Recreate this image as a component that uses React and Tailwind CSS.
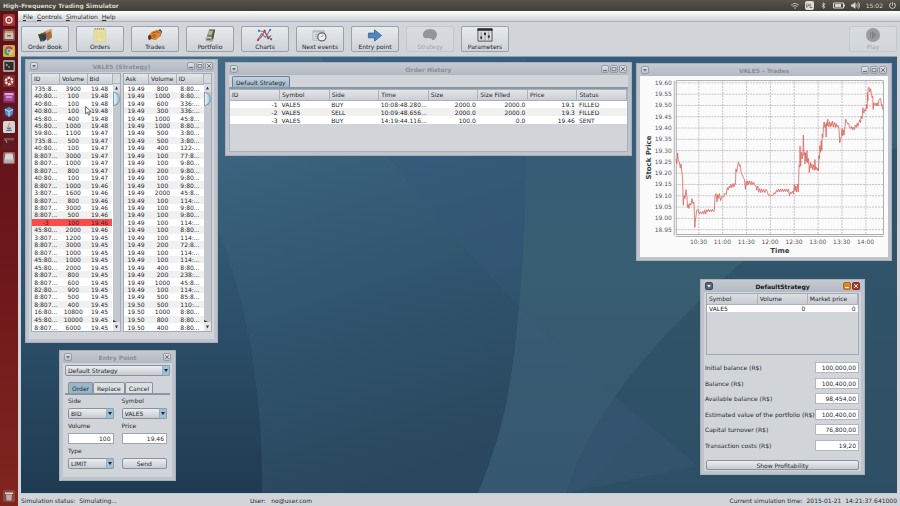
import React from "react";
import { FaWifi, FaBluetoothB, FaVolumeHigh, FaPowerOff } from "react-icons/fa6";

const BIDS = [
  ["735:8...", 3900, "19.48"], ["40:80...", 100, "19.48"], ["40:80...", 100, "19.48"],
  ["40:80...", 100, "19.48"], ["45:80...", 400, "19.48"], ["45:80...", 1000, "19.48"],
  ["59:80...", 1100, "19.47"], ["735:8...", 500, "19.47"], ["40:80...", 100, "19.47"],
  ["8:807...", 3000, "19.47"], ["8:807...", 1000, "19.47"], ["8:807...", 800, "19.47"],
  ["40:80...", 100, "19.47"], ["8:807...", 1000, "19.46"], ["3:807...", 1600, "19.46"],
  ["8:807...", 800, "19.46"], ["8:807...", 3000, "19.46"], ["8:807...", 500, "19.46"],
  ["-3", 100, "19.46"], ["45:80...", 2000, "19.46"], ["3:807...", 1200, "19.45"],
  ["8:807...", 3000, "19.45"], ["8:807...", 1000, "19.45"], ["45:80...", 1000, "19.45"],
  ["45:80...", 2000, "19.45"], ["8:807...", 800, "19.45"], ["8:807...", 600, "19.45"],
  ["82:80...", 900, "19.45"], ["8:807...", 500, "19.45"], ["8:807...", 400, "19.45"],
  ["16:80...", 10800, "19.45"], ["45:80...", 10000, "19.45"], ["8:807...", 6000, "19.45"],
];

const ASKS = [
  ["19.49", 800, "8:80..."], ["19.49", 1000, "8:80..."], ["19.49", 600, "336:..."],
  ["19.49", 300, "336:..."], ["19.49", 1000, "45:8..."], ["19.49", 1000, "8:80..."],
  ["19.49", 500, "3:80..."], ["19.49", 500, "3:80..."], ["19.49", 400, "122-..."],
  ["19.49", 100, "77:8..."], ["19.49", 100, "9:80..."], ["19.49", 200, "9:80..."],
  ["19.49", 100, "9:80..."], ["19.49", 100, "9:80..."], ["19.49", 2000, "45:8..."],
  ["19.49", 100, "114:..."], ["19.49", 100, "9:80..."], ["19.49", 100, "9:80..."],
  ["19.49", 100, "114:..."], ["19.49", 100, "8:80..."], ["19.49", 100, "114:..."],
  ["19.49", 200, "72:8..."], ["19.49", 100, "114:..."], ["19.49", 100, "114:..."],
  ["19.49", 400, "8:80..."], ["19.49", 200, "238:..."], ["19.49", 1000, "45:8..."],
  ["19.49", 100, "114:..."], ["19.49", 500, "85:8..."], ["19.50", 500, "110:..."],
  ["19.50", 1000, "8:80..."], ["19.50", 800, "8:80..."], ["19.50", 400, "8:80..."],
];

const ORDERS = [
  ["-1", "VALE5", "BUY", "10:08:48.280...", "2000.0", "2000.0", "19.1", "FILLED"],
  ["-2", "VALE5", "SELL", "10:09:48.656...", "2000.0", "2000.0", "19.3", "FILLED"],
  ["-3", "VALE5", "BUY", "14:19:44.116...", "100.0", "0.0", "19.46", "SENT"],
];

const BALANCES = [
  ["Initial balance (R$)", "100,000,00"],
  ["Balance (R$)", "100,400,00"],
  ["Available balance (R$)", "98,454,00"],
  ["Estimated value of the portfolio (R$)", "100,400,00"],
  ["Capital turnover (R$)", "76,800,00"],
  ["Transaction costs (R$)", "19,20"],
];

const PRICES = ["19.60", "19.55", "19.50", "19.45", "19.40", "19.35", "19.30", "19.25", "19.20", "19.15", "19.10", "19.05", "19.00", "18.95"];
const TIMES = ["10:30", "11:00", "11:30", "12:00", "12:30", "13:00", "13:30", "14:00"];

const TRADES =
  "136,310 138,325 141,292 143,318 146,320 149,338 151,325 154,352 156,372 157,420 158,450 160,420 163,430 166,403 169,425 171,457 173,448 175,460 178,444 181,450 184,430 187,445 190,440 191,470 193,517 194,500 196,485 199,464 204,464 206,477 210,470 213,477 217,468 220,477 223,464 226,477 229,464 231,470 234,462 237,470 240,464 243,470 246,462 249,470 252,466 254,420 257,415 260,440 262,418 265,430 267,415 271,436 276,422 280,426 283,415 288,417 291,397 294,404 297,392 299,398 302,387 305,397 308,385 311,395 313,385 316,387 317,340 320,350 322,332 325,320 328,332 330,328 333,352 337,360 341,370 343,372 346,402 348,378 351,390 353,376 356,387 359,377 362,388 365,378 368,388 371,381 374,388 378,392 380,405 383,392 386,411 389,400 392,412 395,401 398,411 401,402 405,412 408,402 412,408 415,420 418,418 421,422 425,420 430,420 433,412 436,416 440,404 443,410 446,401 449,410 452,401 455,409 458,401 461,409 464,401 467,409 470,401 473,409 476,401 479,422 482,410 485,415 488,408 491,416 494,388 496,408 498,392 501,410 503,386 506,410 508,330 510,335 511,272 513,332 515,290 518,310 520,280 521,238 523,300 525,290 526,325 528,292 530,318 532,285 534,322 536,308 538,330 539,352 542,320 544,338 547,325 549,342 552,328 554,345 556,312 558,342 560,335 563,345 565,338 567,346 568,300 570,310 571,270 573,290 575,255 577,285 578,235 580,245 582,210 584,198 586,215 588,205 590,244 591,200 593,210 595,190 597,212 600,198 602,214 605,200 607,210 609,196 612,214 615,200 618,215 620,203 623,214 626,208 629,220 631,262 634,250 636,240 638,218 640,240 642,222 644,238 647,212 649,190 652,198 655,205 658,202 660,212 663,218 666,212 669,222 672,214 675,222 678,208 681,215 684,202 686,212 689,200 692,192 694,200 696,180 699,188 701,155 704,172 707,160 710,165 712,145 714,158 715,110 716,135 717,95 720,94 722,108 724,98 727,112 729,125 731,120 732,160 734,140 737,148 740,142 742,150 744,140 747,150 749,134 752,128 755,128 757,150 759,145 761,160 763,162";

function TitleButton({ kind, label, className = "" }) {
  return (
    <button type="button" aria-label={label} className={`size-[8px] rounded-xs border bg-linear-to-b ${className}`}>
      <svg viewBox="0 0 6 6" className="block size-[6px]" fill="none" stroke="currentColor">
        {kind === "menu" && <path d="M1.2 2h3.6L3 4.4z" fill="currentColor" stroke="none" />}
        {kind === "min" && <path d="M1 4.6h4" />}
        {kind === "max" && <path d="M1 1.5h4v3.2H1z" strokeWidth=".7" />}
        {kind === "close" && <path d="M1.2 1.2l3.6 3.6M4.8 1.2L1.2 4.8" strokeWidth=".9" />}
      </svg>
    </button>
  );
}

function Frame({ title, closeOnly, active, className, children }) {
  const plain = "z-10 border-[#969ca6] from-[#dfe2e6] to-[#bcc2cb] text-[#5f646c]";
  return (
    <section className={`absolute flex flex-col border border-[#a9b0ba] bg-[#bfc4cc] px-[3px] pb-[3px] ${className}`}>
      <header className="relative flex h-3 shrink-0 items-center justify-end gap-px bg-linear-to-b from-[#c5cad1] to-[#b3b9c3] px-px">
        <h2 className={`absolute inset-x-0 text-center text-[6px] font-bold ${active ? "text-[#17191c]" : "text-[#8a8f96]"}`}>{title}</h2>
        <TitleButton kind="menu" label="Window menu" className={active ? "z-10 mr-auto border-[#3f4a5d] bg-[#56637a] bg-none text-white" : `mr-auto ${plain}`} />
        {(active || !closeOnly) && <TitleButton kind="min" label="Minimize" className={active ? "z-10 border-[#b5681c] bg-[#d9861f] bg-none text-white" : plain} />}
        {!closeOnly && <TitleButton kind="max" label="Maximize" className={plain} />}
        <TitleButton kind="close" label="Close" className={active ? "z-10 border-[#8a2a26] bg-[#b03a30] bg-none text-white" : plain} />
      </header>
      <div className="flex min-h-0 flex-1 flex-col bg-[#d1d5d9]">{children}</div>
    </section>
  );
}

function BookTable({ heads, rows, widths, label }) {
  return (
    <div className="flex min-w-0 flex-1 border border-[#a5abb3]">
      <table aria-label={label} className="h-[257px] flex-1 table-fixed bg-white">
        <thead className="h-[10px] bg-linear-to-b from-[#e6e8eb] to-[#c9cdd3]">
          <tr>
            {heads.map((h, i) => (
              <th key={h} scope="col" className={`${widths[i]} h-[10px] border-r border-b border-[#adb2ba] pl-[2px] text-left font-normal`}>{h}</th>
            ))}
          </tr>
        </thead>
        <tbody>
          {rows.map((r, i) => (
            <tr key={i} className={r[0] === "-3" ? "bg-[#fb4c4c]" : i % 2 ? "bg-[#f0f0f0]" : "bg-white"}>
              {r.map((c, j) => (
                <td key={j} className="text-center">{c}</td>
              ))}
            </tr>
          ))}
        </tbody>
      </table>
      <div className="flex w-[7px] flex-col items-center bg-[#c3c8cf] text-[#33373c]">
        <div className="h-[10px] w-full border-b border-[#adb2ba] bg-[#d5d8dc]" />
        <svg viewBox="0 0 7 8" className="h-2 w-full bg-[#d9dce0]"><path d="M2 5.500h3L3.500 2.500z" fill="currentColor" /></svg>
        <div className="h-[14px] w-full rounded-r-full border border-[#7d9db5] bg-linear-to-r from-[#e6f1f8] to-[#9fc3da]" />
        <svg viewBox="0 0 7 11" className="mt-auto h-[11px] w-full"><path d="M0 0l4 2h3v9H0z" fill="#e4e6e9" /><path d="M0 0l4 2H0zM2 5.500h3L3.500 8.500z" fill="currentColor" /></svg>
      </div>
    </div>
  );
}

function Select({ label, value, id }) {
  return (
    <div className="relative">
      <select id={id} aria-label={label} defaultValue={value} className="block h-[11px] w-full appearance-none rounded-xs border border-[#8b929c] bg-linear-to-b from-[#eceef0] to-[#c6cbd1] pl-[2px] leading-none">
        <option>{value}</option>
      </select>
      <svg viewBox="0 0 8 11" className="pointer-events-none absolute top-0 right-0 h-[11px] w-2">
        <path d="M0 .3h6.500a1.200 1.200 0 0 1 1.200 1.200v8a1.200 1.200 0 0 1-1.200 1.200H0z" fill="#a3bfd4" stroke="#748ea5" strokeWidth=".6" />
        <path d="M2 4h4L4 7z" fill="#1d2733" />
      </svg>
    </div>
  );
}

const TOOLS = [
  {
    name: "Order Book",
    icon: (
      <>
        <path d="M8 5l7-3 1 9-5 4z" fill="#a56b3c" /><path d="M8 5l7-3 .3 2-6 3z" fill="#d9a878" />
        <path d="M4 7l5-2 1 8-4 3z" fill="#7a5426" /><path d="M1 8l4-1 2 6-3 3z" fill="#3d4a2a" /><path d="M5 9l4-2 1 6-3 2z" fill="#253e66" />
      </>
    ),
  },
  {
    name: "Orders",
    icon: (
      <>
        <path d="M2 2h12.500v14H2z" fill="#eadf9f" stroke="#cfc58b" strokeWidth=".5" />
        <path d="M3 2h11" stroke="#76705a" strokeWidth="1.500" strokeDasharray="1 1.200" /><path d="M4.500 3v13" stroke="#dfc9a0" strokeWidth=".6" /><path d="M6 6h7M6 8.500h7M6 11h7" stroke="#d6cc8e" strokeWidth=".4" />
      </>
    ),
  },
  {
    name: "Trades",
    icon: (
      <>
        <path d="M10 5l4-3 2 3-2 5-4 1z" fill="#4c3a44" /><path d="M1 10l4-5 6-2 4 2-1 5-5 4-4-1-3 1z" fill="#dc8a32" />
        <path d="M5 7l5-2 3 1M4 10l5-2M6 12l4-3" stroke="#83400f" strokeWidth=".8" fill="none" /><path d="M1 10l2-2 2 4-3 2z" fill="#6b2a12" />
      </>
    ),
  },
  {
    name: "Portfolio",
    icon: (
      <>
        <path d="M8 2l6 1-3 8-6-1z" fill="#77776a" /><path d="M8 4l4 .5-2 4-4-.5z" fill="#b9b49a" />
        <path d="M4 11l8 1-1 4-7-1z" fill="#a8aa9c" /><path d="M12 3l2 0-2 10-2 0z" fill="#54543f" /><path d="M5 13h4" stroke="#4a4b42" />
      </>
    ),
  },
  {
    name: "Charts",
    icon: (
      <>
        <path d="M1 13l4-6 4 4 5-8" stroke="#5f88b8" strokeWidth="1.200" fill="none" /><path d="M2 4l5 1 4 4 4 4" stroke="#5f88b8" fill="none" />
        <path d="M1 14l4-4 3-6 4 8 3-3" stroke="#cc4444" strokeWidth="1.200" fill="none" />
        <path d="M13 2h2v2h-2zM1 3h2v2H1zM14 12h2v2h-2z" fill="#3f70ae" /><path d="M0 13h2v2H0zM7 3h2v2H7zM11 11h2v2h-2z" fill="#c03434" />
      </>
    ),
  },
  {
    name: "Next events",
    icon: (
      <>
        <path d="M1 4h12v10H1z" fill="#e2e3e4" stroke="#a3a6a8" strokeWidth=".7" /><path d="M1 4h12v2H1z" fill="#bcbfc2" /><path d="M3 8h4M3 10h3M3 12h4" stroke="#9b9ea1" strokeWidth=".8" />
        <circle cx="10.500" cy="10.500" r="4.300" fill="#edefef" stroke="#5c6064" strokeWidth="1.200" /><path d="M10.500 10.500l2-2M10.500 10.500l-1-1" stroke="#777" strokeWidth=".7" />
      </>
    ),
  },
  { name: "Entry point", icon: <path d="M1.500 6.500h6.500V3l7.500 6-7.500 6v-3.500H1.500z" fill="#4e8ac0" stroke="#2d5885" strokeWidth=".8" /> },
  { name: "Strategy", off: true, icon: <path d="M1 8c0-3 3-6 8-6 4 0 7 3 7 6s-2 3-2 5l-3 1-1-2c-2 1-3-1-5 0-3 0-4-1-4-4z" fill="#939699" /> },
  {
    name: "Parameters",
    icon: (
      <>
        <path d="M1 2h15v13H1z" fill="#d9dbdb" stroke="#505356" strokeWidth="1" /><path d="M.5 1.500h16v2.500H.5z" fill="#282b2e" />
        <path d="M4.500 5v9M8.500 5v9M12.500 5v9" stroke="#77797c" strokeWidth=".7" /><path d="M3.500 10h2v2.500h-2zM7.500 6h2v2.500h-2zM11.500 9h2v2.500h-2z" fill="#2b2d30" />
      </>
    ),
  },
];

function ToolButton({ name, icon, off }) {
  return (
    <button
      type="button"
      disabled={off}
      className={`flex h-[26px] w-12 flex-col items-center rounded-xs border bg-linear-to-b ${off ? "border-[#c3c8cd] from-[#d8dbde] to-[#d2d6da] text-[#a2a6ab]" : "border-[#9ba1aa] from-[#e7eaed] to-[#cdd2d7] text-[#1e2124]"}`}
    >
      <svg viewBox="0 0 17 17" className="size-4 shrink-0">{icon}</svg>
      <span className="leading-[8px] whitespace-nowrap">{name}</span>
    </button>
  );
}

const LAUNCHERS = [
  { name: "Dash", bg: "#a53635", art: <><circle cx="6" cy="6" r="3" fill="none" stroke="#f2e3df" strokeWidth="1.400" /><circle cx="6" cy="6" r=".8" fill="#f2e3df" /></> },
  { name: "Files", bg: "#8e4f45", art: <><path d="M2 2h8v3H2z" fill="#d79a5e" /><path d="M1.500 4h9v6h-9z" fill="#c9c3bc" /><path d="M4 6h4v1.500H4z" fill="#756d67" /></> },
  { name: "Chrome", bg: "#c9ac55", art: <><circle cx="6" cy="6" r="4.500" fill="#e9c440" /><path d="M6 6L2 3.500A4.500 4.500 0 0 1 10 4z" fill="#cf4335" /><path d="M6 6v4.500A4.500 4.500 0 0 1 2 3.500z" fill="#4b9b4a" /><circle cx="6" cy="6" r="2" fill="#4c86c9" stroke="#fff" strokeWidth=".6" /></> },
  { name: "Terminal", bg: "#a39f9d", art: <><path d="M1.500 2h9v8h-9z" fill="#2d2a2c" /><path d="M3 4l1.500 1L3 6M5 7h2" stroke="#eee" strokeWidth=".7" fill="none" /></> },
  { name: "Settings", bg: "#822b2c", art: <><circle cx="6" cy="6" r="3.200" fill="none" stroke="#e5e1df" strokeWidth="2.400" strokeDasharray="2.600 .7" /><path d="M6 6l3.500 3.500" stroke="#d8564b" strokeWidth="1.500" /></> },
  { name: "Software", bg: "#7c2b58", art: <><path d="M1.500 2h9v3h-9z" fill="#e1a9d2" /><path d="M1.500 4h9v6h-9z" fill="#a84b9c" /><path d="M3 5h6v2H3z" fill="#d58bca" /></> },
  { name: "VirtualBox", bg: "#4f2236", art: <><path d="M6 1l4.500 2.200-1 5.500L6 11 2.500 8.700l-1-5.500z" fill="#5f8abf" /><path d="M2 3.500l4 2 4-2M6 5.500v5" stroke="#d6e4f2" strokeWidth=".9" fill="none" /></> },
  { name: "Java", bg: "#d3d4d3", art: <><path d="M6 2c2 1-2 2 0 4" stroke="#cf7040" fill="none" /><path d="M3.500 6.500h5l-1 2h-3z" fill="#5b7897" /><path d="M3 9.500h6" stroke="#5b7897" /></> },
  { name: "Workspace", bg: "#5c1c22", art: <><path d="M1 1h10v2.500H1z" fill="#7d4f55" /><path d="M2 3l2 1.500L3 6" stroke="#c9b9b9" strokeWidth=".7" fill="none" /></> },
  { name: "Disk", bg: "#9c6060", art: <><path d="M2.500 1.500h7l1 6v3h-9v-3z" fill="#d6d6d6" /><path d="M1.500 7.500h9v3h-9z" fill="#b3b4b6" /></> },
];

function Launcher({ name, bg, art }) {
  return (
    <button type="button" aria-label={name} className="size-3">
      <svg viewBox="0 0 12 12" className="size-3">
        <rect width="12" height="12" rx="1.500" fill={bg} />
        {art}
      </svg>
    </button>
  );
}

function Wallpaper() {
  return (
    <svg viewBox="0 0 876 437" preserveAspectRatio="none" className="absolute inset-0 size-full">
      <defs>
        <linearGradient id="sky" gradientUnits="userSpaceOnUse" x1="200" y1="0" x2="340" y2="437">
          <stop offset="0" stopColor="#436b88" /><stop offset=".5" stopColor="#325872" /><stop offset="1" stopColor="#29475e" />
        </linearGradient>
        <linearGradient id="right" x1="0" y1="0" x2="0" y2="1">
          <stop offset="0" stopColor="#365b7a" /><stop offset=".5" stopColor="#385e72" /><stop offset="1" stopColor="#33556b" />
        </linearGradient>
        <linearGradient id="left" x1="0" y1="0" x2="0" y2="1">
          <stop offset="0" stopColor="#3f6a8b" /><stop offset=".6" stopColor="#2d506a" /><stop offset="1" stopColor="#1f3b52" />
        </linearGradient>
      </defs>
      <rect width="876" height="437" fill="url(#sky)" />
      <path d="M80 0C170 80 243 220 241 437H0V0z" fill="url(#left)" />
      <path d="M505 0Q508 220 486 345Q478 385 457 437H876V0z" fill="url(#right)" />
      <path d="M300 0Q370 120 498 250Q508 130 505 0z" fill="#34577a" opacity=".4" />
      <path d="M498 252L580 329L625 370L560 437H457Q490 360 498 252z" fill="#3a5c7a" opacity=".3" />
      <path d="M876 90Q680 220 594 340Q560 390 545 437H876z" fill="#27495f" opacity=".5" />
      <path d="M594 340L676 410L545 437Q560 390 594 340z" fill="#3b587a" opacity=".35" />
    </svg>
  );
}

function TradesChart() {
  return (
    <svg viewBox="0 0 250 182" className="size-full bg-[#fbfbfb]" role="img" aria-label="Stock price over time">
      <g stroke="#ababab" strokeWidth=".7" strokeDasharray="2 1">
        {PRICES.map((p, i) => <line key={p} x1="36" x2="245" y1={6.7 + i * 11.38} y2={6.7 + i * 11.38} />)}
        {TIMES.map((t, i) => <line key={t} y1="4" y2="160" x1={59.3 + i * 24.05} x2={59.3 + i * 24.05} />)}
      </g>
      <rect x="36.500" y="4.500" width="209" height="155" fill="none" stroke="#8f8f8f" strokeWidth=".7" />
      <path d="M34.500 4.500v156M36 161.500h209.500" stroke="#9a9a9a" strokeWidth=".8" />
      <g fontSize="6" fill="#55585c">
        {PRICES.map((p, i) => <text key={p} x="32" y={8.7 + i * 11.38} textAnchor="end">{p}</text>)}
        {TIMES.map((t, i) => <text key={t} x={59 + i * 24.05} y="169" textAnchor="middle">{t}</text>)}
      </g>
      <g fontSize="7" fontWeight="bold" fill="#3c3f42" textAnchor="middle">
        <text x="141" y="178">Time</text>
        <text transform="translate(11 82) rotate(-90)">Stock Price</text>
      </g>
      <polyline transform="translate(-9 -20) scale(.3333)" points={TRADES} fill="none" stroke="#dd625d" strokeWidth="2.400" />
    </svg>
  );
}

function OrderHistory() {
  const right = [0, 4, 5, 6];
  return (
    <>
      <div role="tablist" className="flex border-b-2 border-[#8797a6] px-[3px] pt-px">
        <button type="button" role="tab" aria-selected="true" className="h-[11px] rounded-t-xs border border-b-0 border-[#67809a] bg-linear-to-b from-[#c3d3df] to-[#9bb6ca] px-[3px]">Default Strategy</button>
      </div>
      <div className="min-h-0 flex-1 border border-[#aab0b8]">
        <table aria-label="Order history" className="w-full table-fixed">
          <thead className="bg-linear-to-b from-[#e3e5e8] to-[#cbcfd5]">
            <tr>
              {["ID", "Symbol", "Side", "Time", "Size", "Size Filled", "Price", "Status"].map((h) => (
                <th key={h} scope="col" className="h-[10px] border-r border-b border-[#adb2ba] pl-[2px] text-left font-normal">{h}</th>
              ))}
            </tr>
          </thead>
          <tbody>
            {ORDERS.map((o, i) => (
              <tr key={o[0]} className={i % 2 ? "bg-[#f0f0f0]" : "bg-white"}>
                {o.map((c, j) => (
                  <td key={j} className={`h-2 px-[2px] whitespace-nowrap ${right.includes(j) ? "text-right" : ""}`}>{c}</td>
                ))}
              </tr>
            ))}
          </tbody>
        </table>
      </div>
    </>
  );
}

function EntryPoint() {
  const field = "h-[11px] w-full border border-[#a0a6ae] bg-white px-[2px] text-right";
  const tab = "h-[11px] rounded-t-xs border border-b-0 border-[#8b929c] px-[3px]";
  return (
    <form className="px-[2px] pt-[2px]">
      <Select label="Strategy" value="Default Strategy" />
      <div role="tablist" className="mt-[6px] flex border-b-2 border-[#8797a6] pl-[3px]">
        <button type="button" role="tab" aria-selected="true" className={`${tab} bg-[#9bb6ca]`}>Order</button>
        <button type="button" role="tab" className={`${tab} bg-[#dde0e3]`}>Replace</button>
        <button type="button" role="tab" className={`${tab} bg-[#dde0e3]`}>Cancel</button>
      </div>
      <div className="grid grid-cols-2 gap-x-2 px-[3px] pt-px">
        <div>
          <label htmlFor="side" className="block h-3 leading-[10px]">Side</label>
          <Select id="side" value="BID" />
        </div>
        <div>
          <label htmlFor="symbol" className="block h-3 leading-[10px]">Symbol</label>
          <Select id="symbol" value="VALE5" />
        </div>
        <div className="mt-[2px]">
          <label htmlFor="volume" className="block h-3 leading-[10px]">Volume</label>
          <input id="volume" className={field} defaultValue="100" />
        </div>
        <div className="mt-[2px]">
          <label htmlFor="price" className="block h-3 leading-[10px]">Price</label>
          <input id="price" className={field} defaultValue="19.46" />
        </div>
        <div className="mt-[2px]">
          <label htmlFor="type" className="block h-3 leading-[10px]">Type</label>
          <Select id="type" value="LIMIT" />
        </div>
        <button type="button" className="h-[11px] self-end rounded-xs border border-[#8b929c] bg-linear-to-b from-[#eceef0] to-[#c6cbd1]">Send</button>
      </div>
    </form>
  );
}

function DefaultStrategy() {
  return (
    <div className="flex flex-1 flex-col px-[2px] pt-px">
      <div className="h-[62px] border border-[#a5abb3]">
        <table aria-label="Positions" className="w-full table-fixed">
          <thead className="bg-linear-to-b from-[#dcdfe3] to-[#c8ccd2]">
            <tr>
              {["Symbol", "Volume", "Market price"].map((h) => (
                <th key={h} scope="col" className="h-[10px] border-r border-b border-[#adb2ba] pl-[2px] text-left font-normal whitespace-nowrap">{h}</th>
              ))}
            </tr>
          </thead>
          <tbody>
            <tr className="bg-white">
              <td className="h-2 px-[2px]">VALE5</td>
              <td className="px-[2px] text-right">0</td>
              <td className="px-[2px] text-right">0</td>
            </tr>
          </tbody>
        </table>
      </div>
      <div className="-ml-px flex flex-1 flex-col justify-between pt-[7px] pb-[9px]">
        {BALANCES.map(([name, value]) => (
          <label key={name} className="flex items-center justify-between">
            <span className="whitespace-nowrap">{name}</span>
            <input className="h-[11px] w-11 shrink-0 border border-[#b3b8be] bg-white px-[2px] text-right" defaultValue={value} />
          </label>
        ))}
      </div>
      <button type="button" className="mb-px h-[10px] rounded-xs border border-[#8b929c] bg-linear-to-b from-[#eceef0] to-[#c6cbd1]">Show Profitability</button>
    </div>
  );
}

export default function App() {
  return (
    <div className="flex h-screen flex-col overflow-hidden bg-[#d1d5d9] font-['DejaVu_Sans',sans-serif] text-[6px] leading-[7px] text-[#25282c]">
      <header className="flex h-[11px] shrink-0 items-center bg-linear-to-b from-[#55534a] to-[#403f39] pr-1 pl-[3px] text-[#d9d5ca]">
        <h1 className="text-[6px] font-bold">High-Frequency Trading Simulator</h1>
        <div className="ml-auto flex items-center gap-[6px] text-[6px]">
          <FaWifi className="size-2" />
          <span className="rounded-xs bg-[#dedbd2] px-px text-[6px] leading-[9px] text-[#45433d]">PL</span>
          <FaBluetoothB className="size-[7px]" />
          <svg viewBox="0 0 12 7" className="h-[7px] w-3"><path d="M.5 1h10v5H.5z" fill="none" stroke="currentColor" /><path d="M2 2h6v3H2zM11 2.500h1v2h-1z" fill="currentColor" /></svg>
          <FaVolumeHigh className="size-[9px]" />
          <span>15:02</span>
          <FaPowerOff className="size-[7px]" />
        </div>
      </header>
      <div className="flex min-h-0 flex-1">
        <nav aria-label="Launcher" className="flex w-[18px] shrink-0 flex-col items-center justify-between bg-linear-to-b from-[#5c1119] via-[#6c171b] to-[#81261f] pt-[3px] pb-1">
          <div className="flex h-[150px] flex-col justify-between">
            {LAUNCHERS.map((l) => <Launcher key={l.name} {...l} />)}
          </div>
          <Launcher name="Trash" bg="#8f4540" art={<><path d="M2 2.500h8v1.500H2z" fill="#dcd6d3" /><path d="M3 4.500h6l-.6 6H3.600z" fill="#b9b0ad" /></>} />
        </nav>
        <main className="flex min-w-0 flex-1 flex-col">
          <nav aria-label="Menu" className="flex h-[11px] shrink-0 items-center gap-1 border-b border-[#adb2ba] bg-linear-to-b from-white to-[#cfd2d7] pl-[5px]">
            {["File", "Controls", "Simulation", "Help"].map((m) => (
              <button key={m} type="button"><u>{m[0]}</u>{m.slice(1)}</button>
            ))}
          </nav>
          <div className="flex h-[34px] shrink-0 items-center gap-[7px] px-[3px]">
            {TOOLS.map((t) => <ToolButton key={t.name} {...t} />)}
            <div className="ml-auto">
              <ToolButton name="Play" off icon={<><circle cx="8.500" cy="8.500" r="7.500" fill="#9a9da0" /><path d="M6 5v7M8 5l4 3.500-4 3.500z" stroke="#7f8285" fill="#85888b" /></>} />
            </div>
          </div>
          <div className="relative mx-[3px] min-h-0 flex-1 overflow-hidden border-t border-[#8fa0ad]">
            <Wallpaper />
            <Frame title="VALE5 (Strategy)" className="top-[2px] left-1 h-[284px] w-[193px]">
              <div className="flex gap-[2px] px-[2px] pt-px">
                <BookTable label="Bids" heads={["ID", "Volume", "Bid"]} rows={BIDS} widths={["w-7", "w-7", "w-[26px]"]} />
                <BookTable label="Asks" heads={["Ask", "Volume", "ID"]} rows={ASKS} widths={["w-[26px]", "w-7", "w-7"]} />
              </div>
            </Frame>
            <Frame title="Order History" className="top-[5px] left-[204px] h-[94px] w-[407px]">
              <OrderHistory />
            </Frame>
            <Frame title="VALE5 - Trades" className="top-[6px] left-[615px] h-[198px] w-[256px]">
              <TradesChart />
            </Frame>
            <Frame title="Entry Point" closeOnly className="top-[293px] left-[38px] h-[131px] w-[117px]">
              <EntryPoint />
            </Frame>
            <Frame title="DefaultStrategy" active closeOnly className="top-[222px] left-[679px] h-[196px] w-[165px]">
              <DefaultStrategy />
            </Frame>
            <svg viewBox="0 0 8 12" className="absolute top-[49px] left-16 h-[10px] w-[7px]"><path d="M.5.5v9l2.200-2 1.500 3.500 1.500-.7-1.500-3.300h3z" fill="#fff" stroke="#222" strokeWidth=".8" /></svg>
          </div>
          <footer className="grid h-[13px] shrink-0 grid-cols-[229px_1fr_auto] items-center border-t border-[#c3cdd4] pr-[3px] pl-[3px] whitespace-pre">
            <span>Simulation status:  Simulating...</span>
            <span>User:   no@user.com</span>
            <span>Current simulation time:  2015-01-21  14:21:37.641000</span>
          </footer>
        </main>
      </div>
    </div>
  );
}
